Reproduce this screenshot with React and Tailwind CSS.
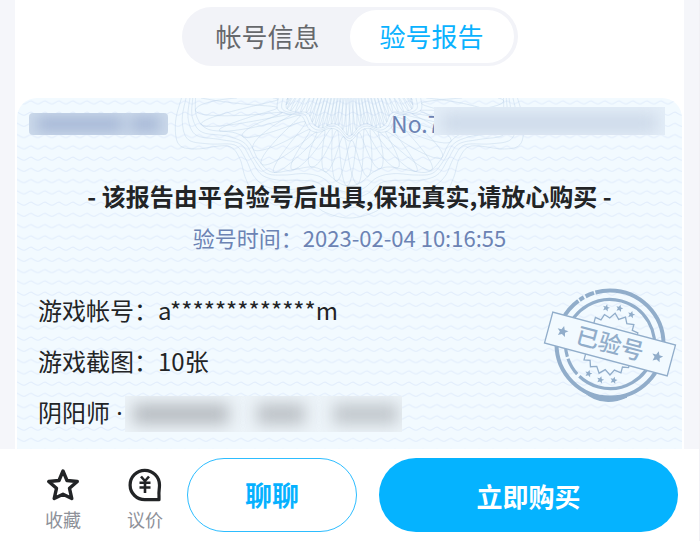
import React from "react";

const INNER = [[-62, 0], [-63, 10], [-54, 14], [-42, 15], [-36, 26], [-28, 30], [-18, 26], [-10, 28], [0, 38]];
const MIDDLE = [[-154, 0], [-153, 18], [-142, 31], [-114, 35], [-100, 45], [-91, 62], [-78, 74], [-58, 72], [-38, 69], [-24, 74], [-12, 84], [0, 88]];
const OUTER = [[-168, 0], [-174, 24], [-171, 46], [-154, 51], [-122, 48], [-110, 60], [-104, 80], [-94, 97], [-75, 102], [-45, 100], [-25, 114], [0, 120]];

const mirror = (pts) => [...pts, ...pts.slice(0, -1).reverse().map(([x, y]) => [-x, y])];

function at(pts, t) {
  const f = Math.min(Math.max(t, 0), 1) * (pts.length - 1);
  const i = Math.min(Math.floor(f), pts.length - 2);
  const u = f - i;
  const p = (k) => pts[Math.min(Math.max(k, 0), pts.length - 1)];
  return [0, 1].map((d) => {
    const [a, b, c, e] = [p(i - 1)[d], p(i)[d], p(i + 1)[d], p(i + 2)[d]];
    return 0.5 * (2 * b + (c - a) * u + (2 * a - 5 * b + 4 * c - e) * u * u + (3 * b - a - 3 * c + e) * u * u * u);
  });
}

function trace(from, to, mix, steps) {
  const a = mirror(from);
  const b = mirror(to);
  let d = "";
  for (let i = 0; i <= steps; i++) {
    const t = i / steps;
    const m = mix(t);
    const p = at(a, t);
    const q = at(b, t);
    d += `${i ? "L" : "M"}${(p[0] + (q[0] - p[0]) * m).toFixed(1)} ${(p[1] + (q[1] - p[1]) * m).toFixed(1)}`;
  }
  return d;
}

const bands = [0, 0.2, 0.4, 0.68, 1].map((m) => trace(MIDDLE, OUTER, () => m, 160));
const innerBands = [0, 0.05, 0.1].map((m) => trace(INNER, MIDDLE, () => m, 140));
const mesh = [0, 1, 2].map((k) =>
  trace(INNER, MIDDLE, (t) => 0.55 + 0.45 * Math.sin(t * Math.PI * 16 + (k * Math.PI * 2) / 3), 700)
);
const core = [[-48, -30], [-42, -26], [-36, -22], [-30, -18], [-24, -14], [-18, -11], [-12, -8], [-6, -6], [0, -5]];
const fan = [0, 1].map((k) => trace(core, INNER, (t) => 0.5 + 0.5 * Math.sin(t * Math.PI * 36 + k * Math.PI), 900));

function Backdrop() {
  return (
    <svg className="absolute inset-0 h-full w-full" aria-hidden="true">
      <defs>
        <pattern id="waves" width="14" height="11.25" patternUnits="userSpaceOnUse">
          <path d="M-3.5 6C-1 6 -1.500 3 0 3S4.500 6 7 6S11.500 3 14 3S16 5 17.500 6" fill="none" stroke="#e3eefc" strokeWidth="1.200" />
        </pattern>
      </defs>
      <rect width="100%" height="100%" fill="url(#waves)" />
      <svg x="50%" y="0" width="1" height="1" overflow="visible">
        <g fill="none" stroke="#b8cfe6" strokeWidth="0.8" strokeOpacity="0.5">
          {[...bands, ...innerBands, ...mesh, ...fan].map((d, i) => (
            <path key={i} d={d} />
          ))}
        </g>
      </svg>
    </svg>
  );
}

const STAR = "M0-4L1.200-1.300L4-1.200L1.900.6L2.600 3.500L0 2L-2.600 3.500L-1.900.6L-4-1.200L-1.200-1.300Z";

function Stamp() {
  return (
    <svg viewBox="-67 -60 134 120" className="h-[120px] w-[134px] shrink-0" role="img" aria-label="已验号">
      <g transform="rotate(15)" stroke="#91adca" fill="none">
        <circle r="53.500" strokeWidth="4" strokeDasharray="134 1.500 5 2 9 1.500 183.200" transform="rotate(75)" />
        <path d="M-14 52Q8 64 30 47Q8 56-14 52Z" fill="#91adca" strokeWidth="1.500" />
        <circle r="44.500" strokeWidth="3.200" strokeDasharray="92 3 18 2 164.600" />
        <path d="M-21-15V-22L-15-21L-13-27L-7-25L-3-31L2-26L8-30L11-24L18-25L18-19L24-18V-13" strokeWidth="1.300" />
        <path d="M-21 15V22L-15 21L-13 27L-7 25L-3 31L2 26L8 30L11 24L18 25L18 19L24 18V13" strokeWidth="1.300" />
        <g fill="#91adca" stroke="none">
          <path d={STAR} transform="translate(-13 -34) scale(.9)" />
          <path d={STAR} transform="translate(0 -37) scale(.9)" />
          <path d={STAR} transform="translate(13 -34) scale(.9)" />
          <path d={STAR} transform="translate(-13 34) scale(.9)" />
          <path d={STAR} transform="translate(0 37) scale(.9)" />
          <path d={STAR} transform="translate(13 34) scale(.9)" />
        </g>
        <rect x="-63.500" y="-16" width="127" height="32" fill="#f2faff" strokeWidth="1.300" />
        <g fill="#91adca" stroke="none">
          <path d={STAR} transform="translate(-49 0) scale(1.400)" />
          <path d={STAR} transform="translate(49 0) scale(1.400)" />
          <text y="8" textAnchor="middle" fontSize="23" fontWeight="500">已验号</text>
        </g>
      </g>
    </svg>
  );
}

function StarIcon() {
  return (
    <svg viewBox="0 0 34 34" className="size-[34px]" fill="none" stroke="#222426" strokeWidth="3.400" strokeLinejoin="round" aria-hidden="true">
      <path d="M17 3L21 12.500L31.300 13.500L23.500 20.300L25.800 30.600L17 26.200L8.200 30.600L10.500 20.300L2.700 13.500L13 12.500Z" />
    </svg>
  );
}

function OfferIcon() {
  return (
    <svg viewBox="0 0 34 34" className="size-[34px]" fill="none" stroke="#222426" strokeWidth="3.200" strokeLinejoin="round" strokeLinecap="round" aria-hidden="true">
      <path d="M31.500 17A14.700 14.700 0 1 0 17 31.700H31V27.500C30.500 25 31.500 21 31.500 17Z" />
      <path d="M13 8.500L17 13L21 8.500M11.500 14.700H22.500M11.500 19.500H22.500M17 13.500V25" strokeWidth="2.600" strokeLinecap="butt" />
    </svg>
  );
}

function Row({ label, children }) {
  return (
    <div className="flex h-[51px] items-center">
      <dt>{label}</dt>
      <dd className="flex items-center">{children}</dd>
    </div>
  );
}

export default function App() {
  return (
    <div className="flex min-h-screen flex-col border-r border-[#f1f1f5] bg-[#f5f6fa] font-['Noto_Sans_CJK_SC',sans-serif] text-[#222426]">
      <main className="mx-[15px] flex flex-1 flex-col bg-white px-[2px] pt-[7px]">
        <div role="tablist" className="mx-auto flex h-[59px] rounded-full bg-[#f2f3f8] px-1 py-[3px] text-[26px]">
          <button role="tab" aria-selected="false" className="w-[164px] rounded-full pb-[2px] text-[#66686c]">帐号信息</button>
          <button role="tab" aria-selected="true" className="w-[164px] rounded-full bg-white pb-[2px] text-[#09b2ff]">验号报告</button>
        </div>

        <section className="relative mt-8 flex-1 overflow-hidden rounded-t-[20px] bg-[#f2faff]">
          <Backdrop />
          <div className="relative">
            <div className="flex items-end justify-between pt-[9px] pr-[17px] pl-3">
              <div className="h-[22px] w-[139px] overflow-hidden rounded-sm bg-[#ccdaeb]">
                <div className="mx-2 mt-1 flex h-[14px] gap-2 blur-[7px]">
                  <span className="flex-[3] bg-[#a3b5d5]" />
                  <span className="flex-1 bg-[#a3b5d5]" />
                </div>
              </div>
              <div className="flex w-[275px] items-end">
                <span className="w-[44px] pl-px text-[23px] leading-6 whitespace-nowrap text-[#6c83b4]">No.7</span>
                <div className="relative h-7 flex-1 overflow-hidden bg-[#e4eef8]">
                  <div className="mx-2 mt-2 h-4 bg-[#c9d6e7] blur-[8px]" />
                </div>
              </div>
            </div>

            <h1 className="mt-[43px] text-center text-[24px] leading-9 font-bold whitespace-nowrap">- 该报告由平台验号后出具,保证真实,请放心购买 -</h1>
            <p className="mt-[7px] text-center text-[22px] leading-8 text-[#6c83b4]">验号时间：2023-02-04 10:16:55</p>

            <div className="mt-[31px] flex items-start justify-between pr-[5px] pl-[21px]">
              <dl className="text-[24px] leading-9 whitespace-nowrap">
                <Row label="游戏帐号：">a*************m</Row>
                <Row label="游戏截图：">10张</Row>
                <Row label={<>阴阳师<span className="font-['Noto_Sans'] leading-none"> ·</span></>}>
                  <div className="mt-1 ml-[2px] flex h-9 w-[277px] items-center gap-7 overflow-hidden bg-[#edf4f9] pr-1 pl-2">
                    <span className="h-5 w-[96px] bg-[#b5babf] blur-[8px]" />
                    <span className="h-5 w-[48px] bg-[#babfc4] blur-[8px]" />
                    <span className="h-5 flex-1 bg-[#bfc5ca] blur-[8px]" />
                  </div>
                </Row>
              </dl>
              <Stamp />
            </div>
          </div>
        </section>
      </main>

      <footer className="flex h-[92px] items-center bg-white pr-[21px] pl-[22px]">
        <button className="flex w-[82px] flex-col items-center pt-[10px] text-[18px] leading-[26px] text-[#8e9199]">
          <StarIcon />
          <span className="mt-1">收藏</span>
        </button>
        <button className="flex w-[82px] flex-col items-center pt-[10px] text-[18px] leading-[26px] text-[#8e9199]">
          <OfferIcon />
          <span className="mt-1">议价</span>
        </button>
        <button className="ml-px h-[74px] w-[170px] rounded-full border border-[#2dbdff] text-[27px] font-bold text-[#05b1ff]">聊聊</button>
        <button className="ml-[22px] h-[74px] flex-1 rounded-full bg-[#05b3ff] text-[26px] font-bold text-white">立即购买</button>
      </footer>
    </div>
  );
}
